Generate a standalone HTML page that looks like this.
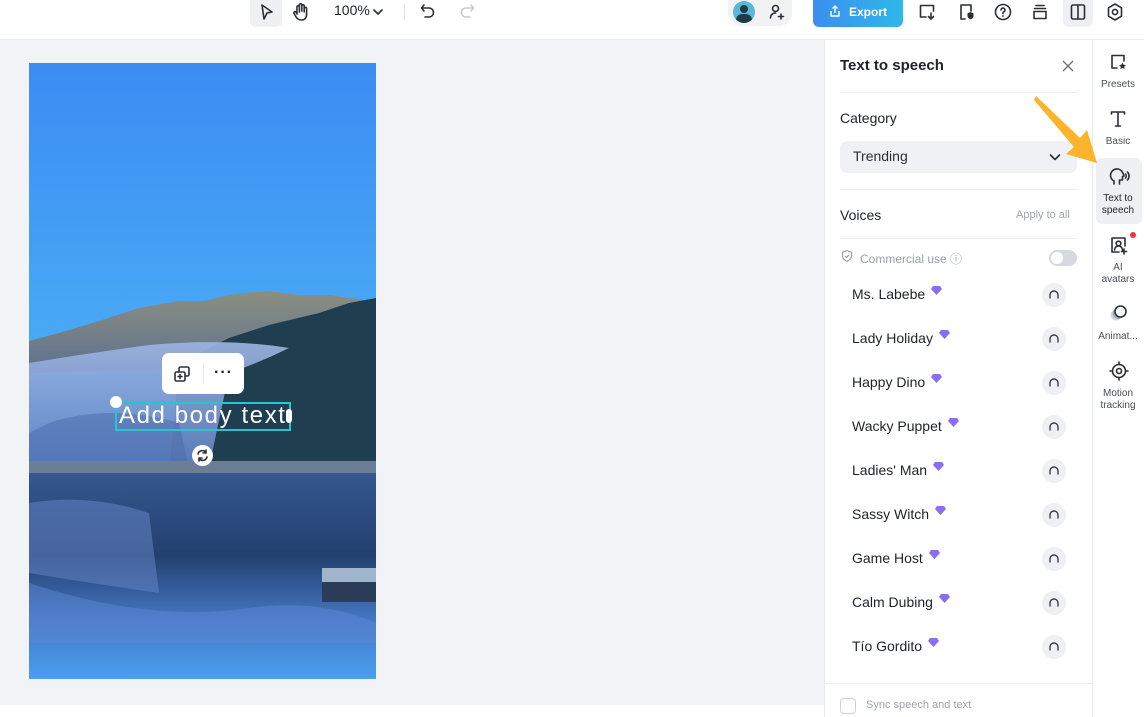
<!DOCTYPE html>
<html><head><meta charset="utf-8"><style>
*{box-sizing:border-box;margin:0;padding:0}
body{width:1144px;height:717px;overflow:hidden;background:#fff;font-family:"Liberation Sans",sans-serif;color:#1f2329;position:relative}
.abs{position:absolute}
.top{left:0;top:0;width:1144px;height:40px;background:#fff;border-bottom:1px solid #eceef2}
.canvas{left:0;top:40px;width:824px;height:665px;background:#f1f3f6}
.panel{left:824px;top:40px;width:268px;height:677px;background:#fff;border-left:1px solid #e8eaee}
.side{left:1092px;top:40px;width:52px;height:677px;background:#fff;border-left:1px solid #e8eaee}
.voice{position:absolute;left:852px;font-size:14px;color:#1f2329}
.gem{display:inline-block;margin-left:6px;vertical-align:4px}
.sl{position:absolute;width:52px;text-align:center;font-size:10px;color:#4a4f57;line-height:12px}
.ic{stroke:#2b2f36;fill:none;stroke-width:1.6;stroke-linecap:round;stroke-linejoin:round}
</style></head><body>
<div class="abs top">
  <div class="abs" style="left:250px;top:0;width:32px;height:27px;background:#eef0f3;border-radius:0 0 6px 6px"></div>
  <svg class="abs" style="left:258px;top:3px" width="18" height="18" viewBox="0 0 18 18"><path class="ic" d="M4 2 L14 9 L9 10 L6 16 Z"/></svg>
  <svg class="abs" style="left:291px;top:2px" width="20" height="20" viewBox="0 0 20 20"><path class="ic" d="M6 11V5a1.2 1.2 0 0 1 2.4 0v5M8.4 9V3a1.2 1.2 0 0 1 2.4 0v6M10.8 9V4a1.2 1.2 0 0 1 2.4 0v6M13.2 10V6.5a1.2 1.2 0 0 1 2.4 0V12c0 4-2 6-5 6s-4-1-5.5-3L3 11.5a1.2 1.2 0 0 1 2-1.3L6 12"/></svg>
  <div class="abs" style="left:334px;top:2px;font-size:14px;color:#1f2329">100%</div>
  <svg class="abs" style="left:372px;top:6px" width="12" height="12" viewBox="0 0 12 12"><path class="ic" d="M2 4l4 4 4-4"/></svg>
  <div class="abs" style="left:404px;top:4px;width:1px;height:16px;background:#e2e4e8"></div>
  <svg class="abs" style="left:419px;top:2px" width="18" height="18" viewBox="0 0 18 18"><path class="ic" d="M5 3L2.5 6 5 9M3 6h7a4.5 4.5 0 0 1 0 9H6"/></svg>
  <svg class="abs" style="left:458px;top:2px" width="18" height="18" viewBox="0 0 18 18"><path d="M13 3l2.5 3L13 9M15 6H8a4.5 4.5 0 0 0 0 9h4" fill="none" stroke="#c8ccd2" stroke-width="1.6" stroke-linecap="round"/></svg>
  <div class="abs" style="left:728px;top:0;width:64px;height:26px;background:#f1f2f4;border-radius:0 0 13px 13px"></div>
  <div class="abs" style="left:733px;top:1px;width:22px;height:22px;border-radius:11px;background:#5ab8d6;overflow:hidden"><div class="abs" style="left:7px;top:4px;width:8px;height:8px;border-radius:4px;background:#1f3a44"></div><div class="abs" style="left:3px;top:13px;width:16px;height:12px;border-radius:8px;background:#1f3a44"></div></div>
  <svg class="abs" style="left:768px;top:3px" width="18" height="18" viewBox="0 0 18 18"><path class="ic" d="M7.5 2.5a3 3 0 1 1 0 6 3 3 0 0 1 0-6M2.5 15c0-3 2-5 5-5M13 11v5M10.5 13.5h5"/></svg>
  <div class="abs" style="left:813px;top:0;width:90px;height:27px;border-radius:0 0 6px 6px;background:linear-gradient(90deg,#3b8ef0,#2fb8e8);color:#fff;font-size:12px;font-weight:bold;padding:5px 0 0 36px">Export</div>
  <svg class="abs" style="left:828px;top:4px" width="14" height="14" viewBox="0 0 14 14"><path d="M7 9V2M4.5 4.5L7 2l2.5 2.5M3 7v5h8V7" fill="none" stroke="#fff" stroke-width="1.4"/></svg>
  <svg class="abs" style="left:917px;top:2px" width="20" height="20" viewBox="0 0 20 20"><path class="ic" d="M9 15H3.5V3.5h13V9M14 11v6M11.5 14.5L14 17l2.5-2.5"/></svg>
  <svg class="abs" style="left:956px;top:2px" width="20" height="20" viewBox="0 0 20 20"><path class="ic" d="M9 17H5V3h10v6"/><path d="M14.5 10l3 1.2v2.5c0 2-1.5 3-3 3.5-1.5-.5-3-1.5-3-3.5v-2.5z" fill="#2b2f36"/></svg>
  <svg class="abs" style="left:993px;top:2px" width="20" height="20" viewBox="0 0 20 20"><circle class="ic" cx="10" cy="10" r="7.5"/><path class="ic" d="M8 8a2 2 0 1 1 2.5 2c-.5.2-.5.7-.5 1.5"/><circle cx="10" cy="14" r=".9" fill="#2b2f36"/></svg>
  <svg class="abs" style="left:1030px;top:2px" width="20" height="20" viewBox="0 0 20 20"><path class="ic" d="M6 3.5h8M4.5 6.5h11M4 9.5h12v7H4z"/></svg>
  <div class="abs" style="left:1063px;top:0;width:30px;height:27px;background:#eef0f3;border-radius:0 0 6px 6px"></div>
  <svg class="abs" style="left:1068px;top:2px" width="20" height="20" viewBox="0 0 20 20"><rect class="ic" x="3.5" y="3" width="13" height="14" rx="1.5"/><path class="ic" d="M10 3v14"/></svg>
  <svg class="abs" style="left:1105px;top:2px" width="20" height="20" viewBox="0 0 20 20"><path class="ic" d="M10 2l6.5 3.8v8.4L10 18l-6.5-3.8V5.8z"/><circle class="ic" cx="10" cy="10" r="2.6"/></svg>
</div>

<div class="abs canvas"></div>
<svg class="abs" style="left:29px;top:63px" width="347" height="616" viewBox="0 0 347 616">
  <defs>
    <linearGradient id="sky" x1="0" y1="0" x2="0" y2="1"><stop offset="0" stop-color="#3c8cf2"/><stop offset=".55" stop-color="#4cb0f6"/><stop offset="1" stop-color="#6cc8f0"/></linearGradient>
    <linearGradient id="water" x1="0" y1="0" x2="0" y2="1"><stop offset="0" stop-color="#35578f"/><stop offset=".4" stop-color="#22406f"/><stop offset=".7" stop-color="#4474c0"/><stop offset="1" stop-color="#4a9ff2"/></linearGradient>
    <linearGradient id="mt" x1="0" y1="0" x2="0" y2="1"><stop offset="0" stop-color="#8c8f80"/><stop offset="1" stop-color="#5c7090"/></linearGradient>
    <linearGradient id="fog" x1="0" y1="0" x2="0" y2="1"><stop offset="0" stop-color="#9cb4e0"/><stop offset="1" stop-color="#5d7fc0"/></linearGradient>
  </defs>
  <rect width="347" height="616" fill="url(#sky)"/>
  <path d="M0 278 L30 270 L70 258 L110 245 L150 238 L175 238 L200 232 L215 230 L240 228 L270 232 L300 232 L330 236 L347 242 L347 300 L0 310 Z" fill="url(#mt)"/>
  <path d="M150 300 L200 275 L240 262 L290 250 L320 240 L347 235 L347 410 L140 410 Z" fill="#1f3e50"/>
  <path d="M0 300 Q60 290 120 282 Q200 275 260 285 Q230 300 200 310 L180 405 L0 405 Z" fill="url(#fog)" opacity=".92"/>
  <path d="M20 360 Q80 340 150 360 L160 405 L0 405 L0 370Z" fill="#4a6aa8" opacity=".5"/>
  <rect x="0" y="398" width="347" height="14" fill="#6b7e96"/>
  <rect x="0" y="410" width="347" height="206" fill="url(#water)"/>
  <path d="M0 440 Q60 430 120 450 L130 530 Q60 520 0 510 Z" fill="#5f7fbf" opacity=".6"/>
  <path d="M0 520 Q120 560 220 545 Q290 535 347 560 L347 580 L0 580 Z" fill="#5b88d4" opacity=".5"/>
  <rect x="293" y="505" width="54" height="14" fill="#a0b4cc"/>
  <rect x="293" y="519" width="54" height="20" fill="#2a3c58"/>
</svg>
<div class="abs" style="left:162px;top:353px;width:82px;height:41px;background:#fff;border-radius:7px"></div>
<svg class="abs" style="left:173px;top:365px" width="18" height="18" viewBox="0 0 18 18"><rect class="ic" x="6" y="2" width="10" height="9" rx="1.5"/><rect x="2" y="7" width="10" height="9" rx="1.5" fill="#fff" stroke="#2b2f36" stroke-width="1.6"/><path class="ic" d="M7 9.5v4M5 11.5h4"/></svg>
<div class="abs" style="left:203px;top:364px;width:1px;height:20px;background:#e6e8ec"></div>
<div class="abs" style="left:214px;top:364px;font-size:16px;font-weight:bold;letter-spacing:1px;color:#1f2329">···</div>
<div class="abs" style="left:115px;top:402px;width:176px;height:29px;border:2px solid #2bc4cc"></div>
<div class="abs" style="left:110px;top:396px;width:12px;height:12px;border-radius:6px;background:#fff"></div>
<div class="abs" style="left:286px;top:409px;width:6px;height:14px;border-radius:3px;background:#fff"></div>
<div class="abs" style="left:119px;top:402px;font-size:24px;color:#fff;letter-spacing:1.6px">Add body text</div>
<div class="abs" style="left:192px;top:445px;width:21px;height:21px;border-radius:11px;background:#fff"></div>
<svg class="abs" style="left:195px;top:448px" width="15" height="15" viewBox="0 0 15 15"><path class="ic" d="M3 6a4.5 4.5 0 0 1 8-1.5M12 9a4.5 4.5 0 0 1-8 1.5M11 2v3H8M4 13v-3h3"/></svg>

<div class="abs panel"></div>
<div class="abs" style="left:840px;top:57px;font-size:15px;font-weight:bold">Text to speech</div>
<svg class="abs" style="left:1060px;top:58px" width="16" height="16" viewBox="0 0 16 16"><path d="M3 3l10 10M13 3L3 13" stroke="#6b7079" stroke-width="1.4"/></svg>
<div class="abs" style="left:840px;top:92px;width:237px;height:1px;background:#eceef1"></div>
<div class="abs" style="left:840px;top:110px;font-size:14px">Category</div>
<div class="abs" style="left:840px;top:141px;width:237px;height:32px;background:#eff1f4;border-radius:7px;font-size:14px;padding:7px 0 0 13px;color:#2b2f36">Trending</div>
<svg class="abs" style="left:1048px;top:150px" width="14" height="14" viewBox="0 0 14 14"><path class="ic" d="M2.5 5l4.5 4.5L11.5 5"/></svg>
<div class="abs" style="left:840px;top:189px;width:237px;height:1px;background:#eceef1"></div>
<div class="abs" style="left:840px;top:207px;font-size:14px">Voices</div>
<div class="abs" style="left:1016px;top:209px;font-size:11px;color:#a0a4ab">Apply to all</div>
<div class="abs" style="left:840px;top:238px;width:237px;height:1px;background:#eceef1"></div>
<svg class="abs" style="left:840px;top:249px" width="14" height="14" viewBox="0 0 14 14"><path d="M7 1.5l4.5 1.8v3.5c0 3-2.2 4.6-4.5 5.5-2.3-.9-4.5-2.5-4.5-5.5V3.3z M5 7l1.5 1.5L9 6" fill="none" stroke="#9aa0a8" stroke-width="1.2"/></svg>
<div class="abs" style="left:860px;top:250px;font-size:12px;color:#9aa0a8">Commercial use ⓘ</div>
<div class="abs" style="left:1049px;top:250px;width:28px;height:16px;border-radius:8px;background:#d6d9de"><div class="abs" style="left:2px;top:2px;width:12px;height:12px;border-radius:6px;background:#fff"></div></div>

<div class="voice" style="top:286px">Ms. Labebe<svg class="gem" width="11" height="9" viewBox="0 0 11 9"><path d="M2 0h7l2 3-5.5 6L0 3z" fill="#8b6cf6"/></svg></div>
<div class="voice" style="top:330px">Lady Holiday<svg class="gem" width="11" height="9" viewBox="0 0 11 9"><path d="M2 0h7l2 3-5.5 6L0 3z" fill="#8b6cf6"/></svg></div>
<div class="voice" style="top:374px">Happy Dino<svg class="gem" width="11" height="9" viewBox="0 0 11 9"><path d="M2 0h7l2 3-5.5 6L0 3z" fill="#8b6cf6"/></svg></div>
<div class="voice" style="top:418px">Wacky Puppet<svg class="gem" width="11" height="9" viewBox="0 0 11 9"><path d="M2 0h7l2 3-5.5 6L0 3z" fill="#8b6cf6"/></svg></div>
<div class="voice" style="top:462px">Ladies' Man<svg class="gem" width="11" height="9" viewBox="0 0 11 9"><path d="M2 0h7l2 3-5.5 6L0 3z" fill="#8b6cf6"/></svg></div>
<div class="voice" style="top:506px">Sassy Witch<svg class="gem" width="11" height="9" viewBox="0 0 11 9"><path d="M2 0h7l2 3-5.5 6L0 3z" fill="#8b6cf6"/></svg></div>
<div class="voice" style="top:550px">Game Host<svg class="gem" width="11" height="9" viewBox="0 0 11 9"><path d="M2 0h7l2 3-5.5 6L0 3z" fill="#8b6cf6"/></svg></div>
<div class="voice" style="top:594px">Calm Dubing<svg class="gem" width="11" height="9" viewBox="0 0 11 9"><path d="M2 0h7l2 3-5.5 6L0 3z" fill="#8b6cf6"/></svg></div>
<div class="voice" style="top:638px">Tío Gordito<svg class="gem" width="11" height="9" viewBox="0 0 11 9"><path d="M2 0h7l2 3-5.5 6L0 3z" fill="#8b6cf6"/></svg></div>

<svg class="abs" style="left:1042px;top:283px" width="24" height="388" viewBox="0 0 24 388">
  <g fill="#eef0f3"><circle cx="12" cy="12" r="12"/><circle cx="12" cy="56" r="12"/><circle cx="12" cy="100" r="12"/><circle cx="12" cy="144" r="12"/><circle cx="12" cy="188" r="12"/><circle cx="12" cy="232" r="12"/><circle cx="12" cy="276" r="12"/><circle cx="12" cy="320" r="12"/><circle cx="12" cy="364" r="12"/></g>
  <g fill="none" stroke="#3a3f47" stroke-width="1.4" stroke-linecap="round">
    <path d="M8 15v-3a4 4 0 0 1 8 0v3"/><path transform="translate(0,44)" d="M8 15v-3a4 4 0 0 1 8 0v3"/><path transform="translate(0,88)" d="M8 15v-3a4 4 0 0 1 8 0v3"/><path transform="translate(0,132)" d="M8 15v-3a4 4 0 0 1 8 0v3"/><path transform="translate(0,176)" d="M8 15v-3a4 4 0 0 1 8 0v3"/><path transform="translate(0,220)" d="M8 15v-3a4 4 0 0 1 8 0v3"/><path transform="translate(0,264)" d="M8 15v-3a4 4 0 0 1 8 0v3"/><path transform="translate(0,308)" d="M8 15v-3a4 4 0 0 1 8 0v3"/><path transform="translate(0,352)" d="M8 15v-3a4 4 0 0 1 8 0v3"/>
  </g>
</svg>
<div class="abs" style="left:824px;top:683px;width:268px;height:1px;background:#eceef1"></div>
<div class="abs" style="left:840px;top:698px;width:16px;height:16px;border:1px solid #cfd3d8;border-radius:4px"></div>
<div class="abs" style="left:866px;top:699px;font-size:11px;color:#a0a4ab">Sync speech and text</div>

<div class="abs side"></div>
<svg class="abs" style="left:1108px;top:52px" width="20" height="20" viewBox="0 0 20 20"><path class="ic" d="M9 16H4V3.5h12V9"/><path d="M14.5 10.5l1.1 2.3 2.4.3-1.8 1.6.5 2.4-2.2-1.2-2.2 1.2.5-2.4-1.8-1.6 2.4-.3z" fill="#2b2f36"/></svg>
<div class="sl" style="left:1092px;top:79px">Presets</div>
<svg class="abs" style="left:1108px;top:109px" width="20" height="20" viewBox="0 0 20 20"><path class="ic" d="M3.5 5V3h13v2M10 3v14M7.5 17h5"/></svg>
<div class="sl" style="left:1092px;top:136px">Basic</div>
<div class="abs" style="left:1096px;top:158px;width:46px;height:66px;background:#eef0f3;border-radius:6px"></div>
<svg class="abs" style="left:1108px;top:166px" width="22" height="20" viewBox="0 0 22 20"><path class="ic" d="M6 18v-3c-2-1-3.5-3-3.5-6A6.5 6.5 0 0 1 15 7l1 3-1.5.5V14h-3v4"/><path class="ic" d="M17.5 8a3 3 0 0 1 0 4M19.5 6a6 6 0 0 1 0 8"/></svg>
<div class="sl" style="left:1092px;top:193px;color:#1f2329">Text to<br>speech</div>
<svg class="abs" style="left:1108px;top:235px" width="22" height="22" viewBox="0 0 22 22"><path class="ic" d="M11 17H4V3h13v8"/><circle class="ic" cx="10.5" cy="8.5" r="2.3"/><path class="ic" d="M6.5 15a4 4 0 0 1 8 0M16 14v5M13.5 16.5h5"/></svg>
<div class="abs" style="left:1130px;top:232px;width:6px;height:6px;border-radius:3px;background:#f5333f"></div>
<div class="sl" style="left:1092px;top:262px">AI<br>avatars</div>
<svg class="abs" style="left:1108px;top:303px" width="22" height="20" viewBox="0 0 22 20"><circle cx="8" cy="12" r="5.5" fill="#d4d7dc"/><circle cx="10" cy="10.5" r="5.5" fill="#a8adb5"/><circle cx="12.5" cy="8.5" r="5.5" fill="#fff" stroke="#2b2f36" stroke-width="1.6"/></svg>
<div class="sl" style="left:1092px;top:331px">Animat...</div>
<svg class="abs" style="left:1108px;top:360px" width="22" height="22" viewBox="0 0 22 22"><circle class="ic" cx="11" cy="11" r="6.5"/><circle class="ic" cx="11" cy="11" r="2.5"/><path class="ic" d="M11 2v2.5M11 17.5V20M2 11h2.5M17.5 11H20"/></svg>
<div class="sl" style="left:1092px;top:388px">Motion<br>tracking</div>

<svg class="abs" style="left:1030px;top:92px" width="75" height="75" viewBox="0 0 75 75"><path d="M6 4 L50 46 L57 38 L67 71 L36 62 L44 55 L4 8 Z" fill="#fbb42c"/></svg>
</body></html>
